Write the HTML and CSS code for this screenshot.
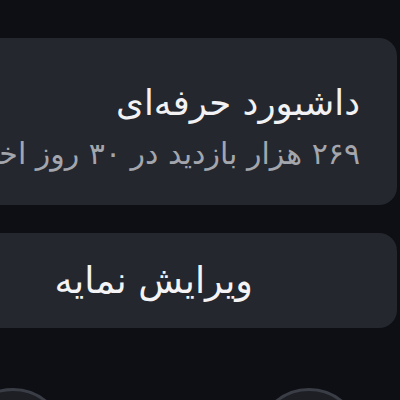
FILE: index.html
```html
<!DOCTYPE html>
<html lang="fa" dir="rtl">
<head>
<meta charset="utf-8">
<link rel="stylesheet" href="styles.css">
</head>
<body>
<div class="page">
  <section class="card stats">
    <h2 class="title">داشبورد حرفه‌ای</h2>
    <p class="sub">۲۶۹ هزار بازدید در ۳۰ روز اخیر</p>
  </section>
  <button class="card edit">ویرایش نمایه</button>
  <div class="circles">
    <span class="circle c1"></span>
    <span class="circle c2"></span>
  </div>
</div>
</body>
</html>
```
FILE: styles.css
```css
html, body {
  margin: 0;
  padding: 0;
  background: #0d0f14;
  overflow: hidden;
  width: 400px;
  height: 400px;
}
.page {
  direction: rtl;
  font-family: "DejaVu Sans", sans-serif;
  padding-top: 38px;
  width: 400px;
}
.card {
  background: #25272e;
  border-radius: 18px;
  margin-right: 3px;
  margin-left: -120px;
  box-sizing: border-box;
}
.stats {
  height: 167px;
  padding: 43px 37px 0 0;
  white-space: nowrap;
}
.title {
  margin: 0;
  font-weight: normal;
  font-size: 35.5px;
  line-height: 44px;
  color: #f2f2f4;
}
.sub {
  margin: 10px 0 0;
  font-size: 30px;
  line-height: 38px;
  color: #a3a6ad;
}
.edit {
  display: block;
  width: calc(100% + 117px);
  height: 95px;
  margin-top: 28px;
  border: none;
  padding: 0 144px 0 0;
  text-align: right;
  font-family: "DejaVu Sans", sans-serif;
  font-size: 36.5px;
  line-height: 44px;
  color: #f4f4f6;
}
.circles {
  direction: ltr;
  display: flex;
  gap: 190px;
  margin-top: 60px;
  margin-left: -40px;
}
.circle {
  width: 100px;
  height: 100px;
  border-radius: 50%;
  border: 3px solid #3a3d45;
  background: #1d1f25;
  flex: none;
}
```
